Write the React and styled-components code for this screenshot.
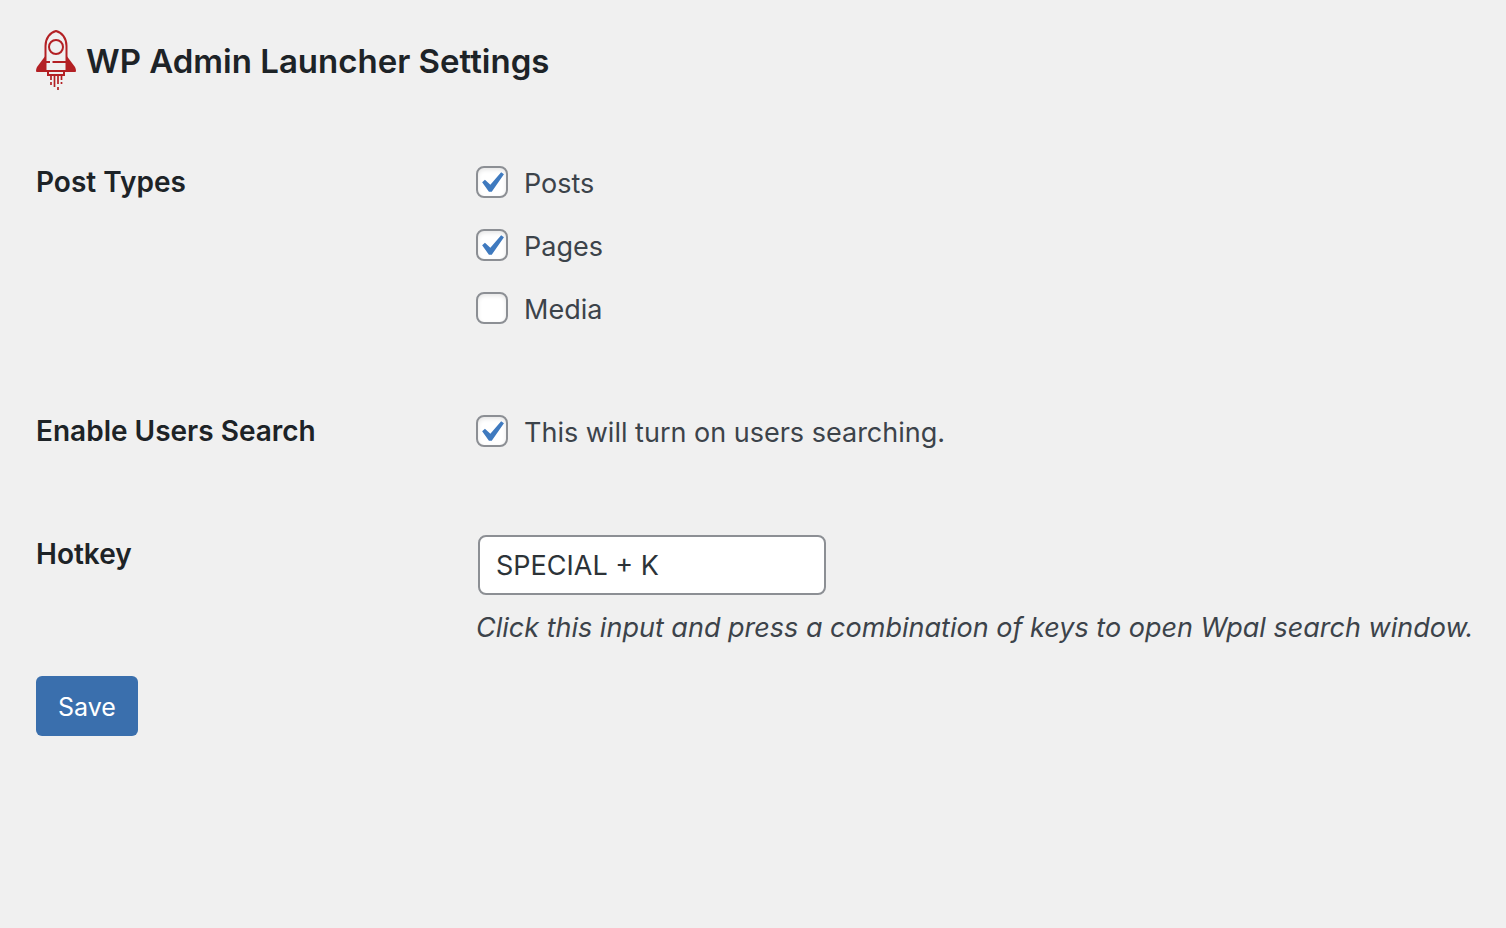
import React, { useState } from "react";
import styled, { createGlobalStyle } from "styled-components";

const GlobalStyle = createGlobalStyle`
  *, *::before, *::after { box-sizing: border-box; }
  body {
    margin: 0;
    background: #f0f0f0;
    color: #3c434a;
    font-family: Inter, "Liberation Sans", sans-serif;
    font-size: 27px;
    line-height: 38px;
  }
`;

const Page = styled.main`
  padding: 30px 32px 40px 36px;
`;

const Header = styled.header`
  display: flex;
  align-items: center;
  gap: 10px;
  margin-bottom: 73px;
`;

const Logo = styled.svg`
  flex: none;
  width: 40px;
  height: 60px;
`;

const Title = styled.h1`
  margin: 0;
  padding-top: 2px;
  color: #1d2327;
  font-size: 33px;
  font-weight: 600;
  line-height: 44px;
`;

const Form = styled.form`
  display: flex;
  flex-direction: column;
  align-items: stretch;
`;

const Fields = styled.div`
  display: flex;
  flex-direction: column;
  gap: 85px;
`;

const Row = styled.div`
  display: grid;
  grid-template-columns: 440px minmax(0, 1fr);
`;

const RowLabel = styled.label`
  color: #1d2327;
  font-size: 28px;
  font-weight: 600;
`;

const Options = styled.div`
  display: flex;
  flex-direction: column;
  align-items: flex-start;
  gap: 25px;
`;

const Option = styled.label`
  display: flex;
  align-items: center;
  gap: 16px;
  min-height: 38px;
`;

const OptionText = styled.span`
  padding-top: 4px;
  line-height: 34px;
`;

const Box = styled.span`
  display: grid;
  width: 32px;
  height: 32px;

  > * { grid-area: 1 / 1; }
`;

const BoxInput = styled.input`
  appearance: none;
  width: 32px;
  height: 32px;
  margin: 0;
  border: 2px solid #8c8f94;
  border-radius: 8px;
  background: #fff;
  box-shadow: inset 0 2px 4px rgba(0, 0, 0, 0.1);

  &:not(:checked) + svg { visibility: hidden; }
`;

const Tick = styled.svg`
  z-index: 1;
  width: 32px;
  height: 32px;
  pointer-events: none;
`;

const TextInput = styled.input`
  display: block;
  width: 348px;
  height: 60px;
  margin: 0 2px;
  padding: 0 16px;
  border: 2px solid #8c8f94;
  border-radius: 8px;
  background: #fff;
  color: #2c3338;
  font: inherit;
`;

const Hint = styled.p`
  margin: 14px 0 0;
  font-style: italic;
`;

const SaveButton = styled.button`
  align-self: flex-start;
  height: 60px;
  margin-top: 29px;
  padding: 2px 22px 0;
  border: 0;
  border-radius: 6px;
  background: #3a6fad;
  color: #fff;
  font: inherit;
  font-size: 25px;
`;

function Rocket() {
  return (
    <Logo viewBox="0 0 40 60" aria-hidden="true">
      <g fill="none" stroke="#b32024" strokeWidth="2">
        <path d="M9.5 40V16C9.5 8 14 2.500 20 1c6 1.500 10.500 7 10.500 15v24" />
        <circle cx="20" cy="17" r="7" />
        <path d="M10 32h4M16.500 32H30" />
        <path d="M12 41v4h16v-4" />
        <path d="M15 46v4M15 52v3M18.500 46v11M22 46v8M22 57v3M25.500 46v4M25.500 52v2" strokeWidth="1.7" />
      </g>
      <g fill="#b32024">
        <path d="M10 25v17H1q-1 0-1-1 0-2 1-4z" />
        <path d="M30 25v17h9q1 0 1-1 0-2-1-4z" />
        <path d="M9 40h22v2H9z" />
      </g>
    </Logo>
  );
}

function CheckOption({ id, label, initial }) {
  const [checked, setChecked] = useState(initial);
  return (
    <Option htmlFor={id}>
      <Box>
        <BoxInput id={id} type="checkbox" checked={checked} onChange={(e) => setChecked(e.target.checked)} />
        <Tick viewBox="0 0 32 32" aria-hidden="true">
          <path
            d="M14.83 4.89l1.34.94-5.81 8.38H9.02L5.78 9.67l1.34-1.25 2.57 2.4z"
            transform="translate(-6 -4) scale(2.1)"
            fill="#3f7abf"
          />
        </Tick>
      </Box>
      <OptionText>{label}</OptionText>
    </Option>
  );
}

export default function App() {
  return (
    <>
      <GlobalStyle />
      <Page>
        <Header>
          <Rocket />
          <Title>WP Admin Launcher Settings</Title>
        </Header>
        <Form onSubmit={(e) => e.preventDefault()}>
          <Fields>
            <Row role="group" aria-labelledby="post-types">
              <RowLabel as="span" id="post-types">Post Types</RowLabel>
              <Options>
                <CheckOption id="posts" label="Posts" initial />
                <CheckOption id="pages" label="Pages" initial />
                <CheckOption id="media" label="Media" initial={false} />
              </Options>
            </Row>
            <Row>
              <RowLabel htmlFor="users">Enable Users Search</RowLabel>
              <Options>
                <CheckOption id="users" label="This will turn on users searching." initial />
              </Options>
            </Row>
            <Row>
              <RowLabel htmlFor="hotkey">Hotkey</RowLabel>
              <div>
                <TextInput id="hotkey" type="text" defaultValue="SPECIAL + K" aria-describedby="hotkey-hint" />
                <Hint id="hotkey-hint">
                  Click this input and press a combination of keys to open Wpal search window.
                </Hint>
              </div>
            </Row>
          </Fields>
          <SaveButton type="submit">Save</SaveButton>
        </Form>
      </Page>
    </>
  );
}
